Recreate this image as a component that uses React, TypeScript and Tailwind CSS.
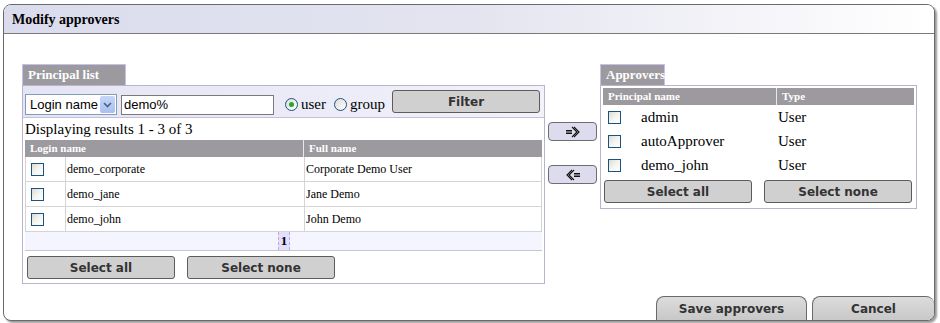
import React from "react";

const serif = "font-['Liberation_Serif','Times_New_Roman',serif]";
const sans = "font-['DejaVu_Sans','Verdana',sans-serif]";

const Check: React.FC = () => (
    <span className="inline-block w-[13px] h-[13px] border border-[#1c5180] bg-gradient-to-br from-[#dcdcd6] via-[#f4f4f0] to-white" />
);

const Radio: React.FC<{ on?: boolean }> = ({ on }) => (
    <span className="inline-flex items-center justify-center w-[13px] h-[13px] rounded-full border border-[#1c5180] bg-gradient-to-br from-[#dcdcd6] to-white">
        {on && <span className="w-[5px] h-[5px] rounded-full bg-[#29a629]" />}
    </span>
);

const GreyButton: React.FC<{ label: string; className?: string }> = ({ label, className }) => (
    <button className={`h-[23px] w-[148px] rounded-[3px] border border-[#5c5c5c] bg-[#d0d0d0] text-[12px] font-bold text-[#333] ${sans} ${className ?? ""}`}>
        {label}
    </button>
);

const ArrowButton: React.FC<{ left?: boolean }> = ({ left }) => (
    <button className="h-[19px] w-[49px] rounded-[4px] border border-[#6e6e6e] bg-[#dcdcee] flex items-center justify-center">
        <svg width="16" height="12" viewBox="0 0 16 12" className={left ? "-scale-x-100" : ""}>
            <path d="M1 4.5h6M1 6h6M1 7.5h6" stroke="#111" strokeWidth="1" />
            <path d="M7 1l5 5-5 5" stroke="#111" strokeWidth="1.1" fill="none" />
            <path d="M9 1l5 5-5 5" stroke="#111" strokeWidth="1.1" fill="none" />
        </svg>
    </button>
);

const Tab: React.FC<{ label: string; w: string }> = ({ label, w }) => (
    <div className={`${w} h-[21px] bg-[#9c9a9e] border-t border-l border-r border-[#c8c0ec] text-white font-bold text-[13px] ${serif} px-[5px] flex items-center`}>
        {label}
    </div>
);

const principals = [
    { login: "demo_corporate", full: "Corporate Demo User" },
    { login: "demo_jane", full: "Jane Demo" },
    { login: "demo_john", full: "John Demo" },
];

const approvers = ["admin", "autoApprover", "demo_john"];

export default function App() {
    return (
        <div className="w-[940px] h-[323px] bg-white pt-[4px] pl-[3px]">
            <div className="w-[932px] h-[317px] border border-[#6a6a6a] rounded-[8px] shadow-[2px_2px_2px_rgba(0,0,0,0.4)] flex flex-col overflow-hidden bg-white">
                <div className={`h-[29px] shrink-0 border-b border-[#7a7a7a] bg-gradient-to-r from-[#dadced] via-[#e4e4f0] to-white px-[8px] flex items-center text-[14px] font-bold text-black ${serif}`}>
                    Modify approvers
                </div>
                <div className="flex-1 pt-[30px] pl-[18px] flex">
                    <div className="w-[523px] flex flex-col">
                        <Tab label="Principal list" w="w-[104px]" />
                        <div className="h-[199px] border border-[#b8b4d0] flex flex-col">
                            <div className="h-[32px] bg-gradient-to-r from-[#e4e4f4] to-[#f2f2fb] border-b border-[#c4c0dc] flex items-center pl-[2px] pr-[4px]">
                                <div className="w-[92px] h-[21px] mt-[6px] border border-[#7f9db9] bg-white flex items-center">
                                    <span className="flex-1 pl-[4px] text-[13px] text-black font-['Liberation_Sans',sans-serif]">Login name</span>
                                    <span className="w-[15px] h-[17px] mr-[1px] bg-gradient-to-b from-[#c6d6f8] to-[#a8c0ee] rounded-[2px] flex items-center justify-center">
                                        <svg width="9" height="6" viewBox="0 0 9 6"><path d="M1 1l3.5 3.5L8 1" stroke="#4d6185" strokeWidth="1.6" fill="none" /></svg>
                                    </span>
                                </div>
                                <div className="ml-[4px] mt-[6px] w-[153px] h-[20px] border border-[#7a7a7a] bg-white pl-[2px] text-[13px] leading-[18px] font-['Liberation_Sans',sans-serif]">demo%</div>
                                <div className={`ml-[11px] mt-[6px] flex items-center gap-[2px] text-[15px] ${serif}`}>
                                    <Radio on /> <span className="ml-[1px]">user</span>
                                </div>
                                <div className={`ml-[8px] mt-[6px] flex items-center gap-[2px] text-[15px] ${serif}`}>
                                    <Radio /> <span className="ml-[1px]">group</span>
                                </div>
                                <GreyButton label="Filter" className="ml-auto h-[22px] w-[147px]" />
                            </div>
                            <div className={`px-[2px] h-[22px] flex items-center text-[15px] ${serif}`}>Displaying results 1 - 3 of 3</div>
                            <div className="mx-[2px]">
                                <div className={`h-[17px] bg-[#9c9a9e] flex text-white font-bold text-[11px] ${serif}`}>
                                    <div className="w-[279px] pl-[5px] flex items-center border-r border-[#e8e8e8]">Login name</div>
                                    <div className="flex-1 pl-[5px] flex items-center">Full name</div>
                                </div>
                                {principals.map((p) => (
                                    <div key={p.login} className={`h-[25px] flex border-b border-l border-r border-[#d4d4d4] text-[12px] ${serif}`}>
                                        <div className="w-[40px] flex items-center pl-[5px] border-r border-[#d4d4d4]"><Check /></div>
                                        <div className="w-[239px] flex items-center pl-[1px] border-r border-[#d4d4d4]">{p.login}</div>
                                        <div className="flex-1 flex items-center pl-[1px]">{p.full}</div>
                                    </div>
                                ))}
                                <div className="h-[19px] bg-[#f5f5ff] border-b border-[#c8c8c8] flex items-center justify-center">
                                    <span className={`px-[2px] h-[18px] bg-[#e2defc] border-l border-r border-dashed border-[#b9a8ea] text-[13px] font-bold ${serif} leading-[18px] ml-[1px]`}>1</span>
                                </div>
                                <div className="flex gap-[12px] mt-[5px] pl-[2px]">
                                    <GreyButton label="Select all" />
                                    <GreyButton label="Select none" />
                                </div>
                            </div>
                        </div>
                    </div>
                    <div className="ml-[3px] w-[49px] flex flex-col pt-[58px] gap-[24px]">
                        <ArrowButton />
                        <ArrowButton left />
                    </div>
                    <div className="ml-[3px] w-[317px] flex flex-col">
                        <Tab label="Approvers" w="w-[65px]" />
                        <div className="h-[124px] border border-[#b8b4d0] p-[2px] flex flex-col">
                            <div className={`h-[17px] bg-[#9c9a9e] flex text-white font-bold text-[11px] ${serif}`}>
                                <div className="w-[174px] pl-[5px] flex items-center border-r border-[#e8e8e8]">Principal name</div>
                                <div className="flex-1 pl-[5px] flex items-center">Type</div>
                            </div>
                            {approvers.map((a) => (
                                <div key={a} className={`h-[24px] flex items-center text-[15px] ${serif}`}>
                                    <div className="w-[38px] pl-[5px] flex items-center"><Check /></div>
                                    <div className="w-[137px]">{a}</div>
                                    <div className="flex-1">User</div>
                                </div>
                            ))}
                            <div className="flex gap-[12px] pl-[1px] mt-[3px]">
                                <GreyButton label="Select all" className="w-[147px]" />
                                <GreyButton label="Select none" className="w-[147px]" />
                            </div>
                        </div>
                    </div>
                </div>
                <div className="h-[24px] shrink-0 flex justify-end gap-[5px]">
                    <button className={`w-[151px] h-[24px] rounded-t-[8px] border-t border-l border-r border-[#6a6a6a] bg-gradient-to-b from-[#dcdcdc] to-[#c8c8c8] text-[12px] font-bold text-[#333] ${sans}`}>Save approvers</button>
                    <button className={`w-[122px] h-[24px] rounded-t-[8px] border-t border-l border-[#6a6a6a] bg-gradient-to-b from-[#dcdcdc] to-[#c8c8c8] text-[12px] font-bold text-[#333] ${sans}`}>Cancel</button>
                </div>
            </div>
        </div>
    );
}
